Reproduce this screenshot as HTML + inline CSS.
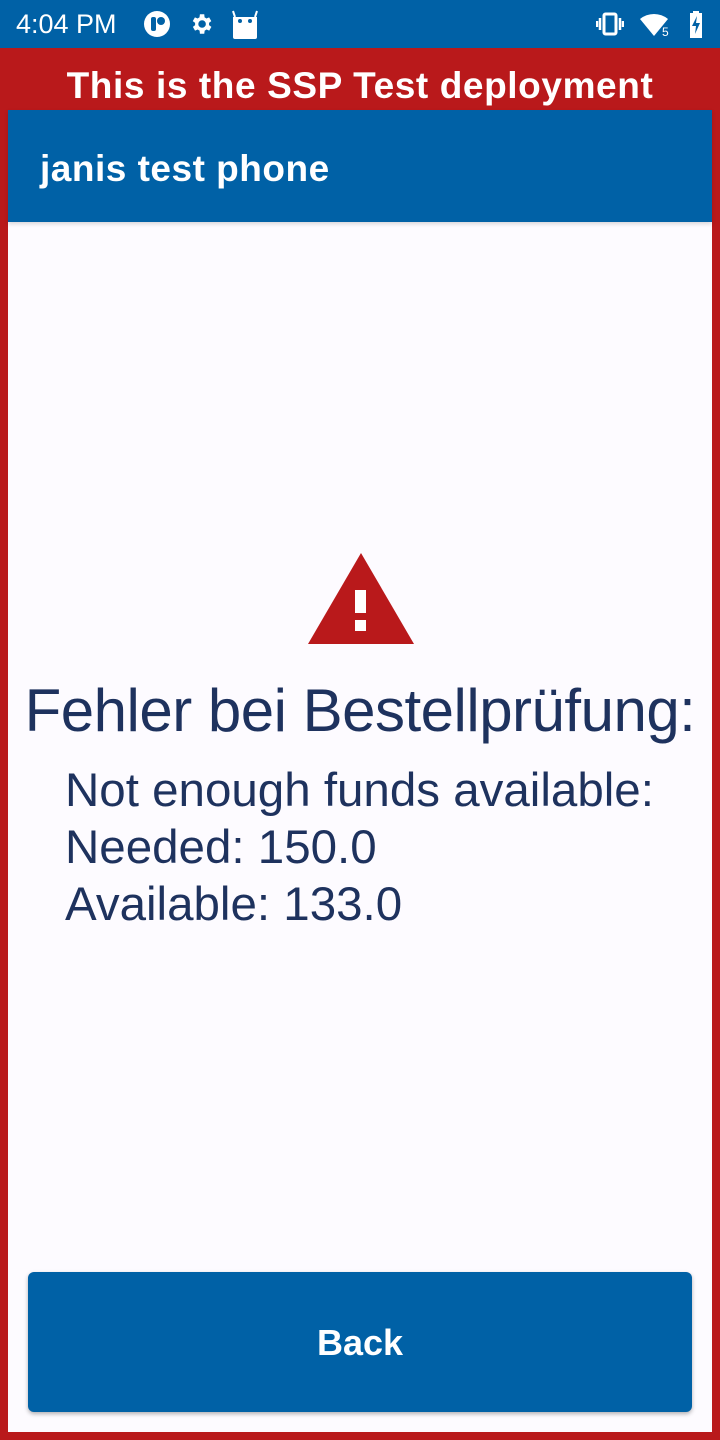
<!DOCTYPE html>
<html><head><meta charset="utf-8"><style>
*{margin:0;padding:0;box-sizing:border-box}
body{width:720px;height:1440px;overflow:hidden;font-family:"Liberation Sans",sans-serif;background:#b9191b;position:relative}
.sb{position:absolute;left:0;top:0;width:720px;height:48px;background:#0061a6;color:#fff}
.banner{position:absolute;top:48px;left:0;width:720px;height:62px;text-align:center;color:#fff;font-size:37px;font-weight:bold;line-height:76px;letter-spacing:0.6px}
.main{position:absolute;left:8px;top:110px;width:704px;height:1322px;background:#fdfbff}
.tb{position:absolute;left:0;top:0;width:704px;height:112px;background:#0061a6;color:#fff;font-size:37px;font-weight:bold;line-height:118px;padding-left:32px;letter-spacing:0.5px;box-shadow:0 2px 4px rgba(0,0,0,.15)}
h1{position:absolute;left:0;width:704px;top:566px;text-align:center;font-weight:normal;color:#1e325e;font-size:60px;letter-spacing:-0.5px;white-space:nowrap}
.msg{position:absolute;left:57px;top:652px;color:#1e325e;font-size:47.5px;line-height:57px}
.btn{position:absolute;left:20px;top:1162px;width:664px;height:140px;background:#0061a6;border-radius:6px;color:#fff;text-align:center;line-height:142px;font-size:36px;font-weight:bold;box-shadow:0 2px 4px rgba(0,0,0,.3)}
</style></head><body>
<div class="sb">
<span style="position:absolute;left:16px;top:9px;font-size:27px">4:04 PM</span>
<svg style="position:absolute;left:142px;top:10px" width="30" height="28" viewBox="0 0 30 28"><circle cx="15" cy="14" r="13" fill="#fff"/><rect x="9" y="7" width="5" height="14" rx="2" fill="#0061a6"/><circle cx="19" cy="11" r="4" fill="#0061a6"/></svg>
<svg style="position:absolute;left:188px;top:11px" width="26" height="26" viewBox="0 0 24 24"><path fill="#fff" d="M19.4 13a7.5 7.5 0 0 0 0-2l2.1-1.6-2-3.5-2.5 1a7 7 0 0 0-1.700-1L15 3h-4l-.4 2.9a7 7 0 0 0-1.7 1l-2.5-1-2 3.5L6.6 11a7.5 7.5 0 0 0 0 2l-2.1 1.6 2 3.5 2.5-1a7 7 0 0 0 1.7 1L11 21h4l.4-2.9a7 7 0 0 0 1.7-1l2.5 1 2-3.5zM13 15.5A3.5 3.5 0 1 1 13 8.5a3.5 3.5 0 0 1 0 7z"/></svg>
<svg style="position:absolute;left:231px;top:9px" width="28" height="30" viewBox="0 0 28 30"><path fill="#fff" d="M2 8h24v20a2 2 0 0 1-2 2H4a2 2 0 0 1-2-2z"/><circle cx="9" cy="12" r="2" fill="#0061a6"/><circle cx="19" cy="12" r="2" fill="#0061a6"/><path stroke="#fff" stroke-width="2" d="M4 8 2 2M24 8l2-6"/></svg>
<svg style="position:absolute;left:596px;top:12px" width="28" height="24" viewBox="0 0 28 24"><rect x="8" y="2" width="12" height="20" rx="1.5" fill="none" stroke="#fff" stroke-width="3"/><path stroke="#fff" stroke-width="2.5" d="M4 6v12M1 9v6M24 6v12M27 9v6"/></svg>
<svg style="position:absolute;left:640px;top:12px" width="32" height="26" viewBox="0 0 32 26"><path fill="#fff" d="M0 7a22 22 0 0 1 28 0L14 24z"/><text x="22" y="24" font-size="12" fill="#fff" font-family="Liberation Sans">5</text></svg>
<svg style="position:absolute;left:688px;top:10px" width="16" height="28" viewBox="0 0 16 28"><path fill="#fff" d="M5 1h6v2h3v25H2V3h3z"/><path fill="#0061a6" d="M9 6 4 16h4l-1 8 5-11H8z"/></svg>
</div>
<div class="banner">This is the SSP Test deployment</div>
<div class="main">
<div class="tb">janis test phone</div>
<svg style="position:absolute;left:299px;top:442px" width="108" height="94" viewBox="0 0 108 94"><path fill="#b9191b" d="M54 1 107 92H1z"/><rect x="48" y="38" width="11" height="23" fill="#fff"/><rect x="48" y="68" width="11" height="11" fill="#fff"/></svg>
<h1>Fehler bei Bestellprüfung:</h1>
<div class="msg">Not enough funds available:<br>Needed: 150.0<br>Available: 133.0</div>
<div class="btn">Back</div>
</div>
</body></html>
